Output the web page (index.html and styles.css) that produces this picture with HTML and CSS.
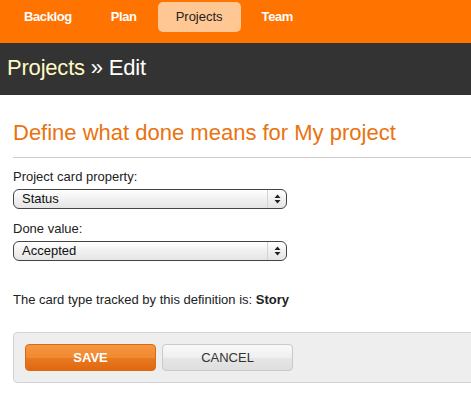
FILE: index.html
```html
<!DOCTYPE html>
<html lang="en">
<head>
<meta charset="utf-8">
<title>Projects » Edit</title>
<link rel="stylesheet" href="styles.css">
</head>
<body>
<nav class="topnav">
  <a class="nav-item" href="#">Backlog</a>
  <a class="nav-item" href="#">Plan</a>
  <a class="nav-item nav-item-active" href="#">Projects</a>
  <a class="nav-item" href="#">Team</a>
</nav>
<header class="page-header">
  <h1 class="page-title"><span class="crumb">Projects</span> » Edit</h1>
</header>
<main class="content">
  <h2 class="section-title">Define what done means for My project</h2>
  <form class="form">
    <label class="field-label">Project card property:</label>
    <div class="select">
      <span class="select-value">Status</span>
      <span class="select-arrows">
        <svg width="7" height="10" viewBox="0 0 7 10"><path d="M3.5 0.5 L6.5 4 L0.5 4 Z" fill="#222"/><path d="M0.5 6 L6.5 6 L3.5 9.5 Z" fill="#222"/></svg>
      </span>
    </div>
    <label class="field-label">Done value:</label>
    <div class="select">
      <span class="select-value">Accepted</span>
      <span class="select-arrows">
        <svg width="7" height="10" viewBox="0 0 7 10"><path d="M3.5 0.5 L6.5 4 L0.5 4 Z" fill="#222"/><path d="M0.5 6 L6.5 6 L3.5 9.5 Z" fill="#222"/></svg>
      </span>
    </div>
    <p class="note">The card type tracked by this definition is: <strong>Story</strong></p>
    <div class="actions">
      <button type="button" class="btn btn-primary">SAVE</button>
      <button type="button" class="btn btn-secondary">CANCEL</button>
    </div>
  </form>
</main>
</body>
</html>
```

FILE: styles.css
```css
html, body {
  margin: 0;
  padding: 0;
  overflow: hidden;
  background: #ffffff;
  font-family: "Liberation Sans", Arial, Helvetica, sans-serif;
  color: #222;
}

.topnav {
  display: flex;
  gap: 3px;
  height: 43px;
  box-sizing: border-box;
  padding: 2px 0 0 6px;
  background: #ff7300;
}

.nav-item {
  display: block;
  height: 30px;
  line-height: 30px;
  padding: 0 18px;
  border-radius: 5px;
  font-size: 13px;
  font-weight: bold;
  letter-spacing: -0.4px;
  color: #ffffff;
  text-decoration: none;
}

.nav-item-active {
  background: #ffc793;
  color: #222;
  font-weight: normal;
  letter-spacing: 0;
}

.page-header {
  background: #333333;
  padding: 12px 7px 14px;
}

.page-title {
  margin: 0;
  font-size: 22px;
  line-height: 26px;
  font-weight: normal;
  color: #ffffff;
  letter-spacing: -0.2px;
}

.crumb {
  color: #fffac4;
}

.content {
  width: 700px;
  padding: 0 0 0 13px;
}

.section-title {
  margin: 25px 0 0;
  padding: 0 0 11px;
  border-bottom: 1px solid #cccccc;
  font-size: 22px;
  line-height: 26px;
  font-weight: normal;
  color: #e9730f;
}

.form {
  display: flex;
  flex-direction: column;
  align-items: flex-start;
}

.field-label {
  display: block;
  margin-top: 11px;
  font-size: 13px;
  line-height: 16px;
  color: #222;
}

.select {
  display: flex;
  align-items: stretch;
  width: 274px;
  height: 20px;
  box-sizing: border-box;
  margin-top: 4px;
  border: 1px solid #444;
  border-radius: 6px;
  background: linear-gradient(#ffffff, #f1f1f1 50%, #e4e4e4);
  font-size: 13px;
}

.select-value {
  flex: 1;
  padding-left: 8px;
  line-height: 18px;
  color: #111;
}

.select-arrows {
  display: flex;
  align-items: center;
  justify-content: center;
  width: 18px;
  border-left: 1px solid #d4d4d4;
}

.select + .field-label {
  margin-top: 12px;
}

.note {
  margin: 31px 0 0;
  font-size: 13px;
  line-height: 16px;
  color: #222;
}

.note strong {
  color: #222;
}

.actions {
  display: flex;
  gap: 6px;
  align-self: stretch;
  box-sizing: border-box;
  height: 51px;
  margin-top: 24px;
  padding: 11px 0 0 11px;
  background: #eeeeee;
  border: 1px solid #d3d3d3;
  border-radius: 4px;
}

.btn {
  width: 131px;
  height: 27px;
  box-sizing: border-box;
  border-radius: 4px;
  font-family: "Liberation Sans", Arial, Helvetica, sans-serif;
  font-size: 13px;
  padding: 0;
  cursor: pointer;
}

.btn-primary {
  border: 1px solid #dd6a12;
  background: linear-gradient(#f5963f, #f08a33 50%, #e87a22 52%, #e0680f);
  color: #ffffff;
  font-weight: bold;
}

.btn-secondary {
  border: 1px solid #c9c9c9;
  background: linear-gradient(#f9f9f9, #efefef 50%, #e6e6e6 52%, #dedede);
  color: #333;
}
```
